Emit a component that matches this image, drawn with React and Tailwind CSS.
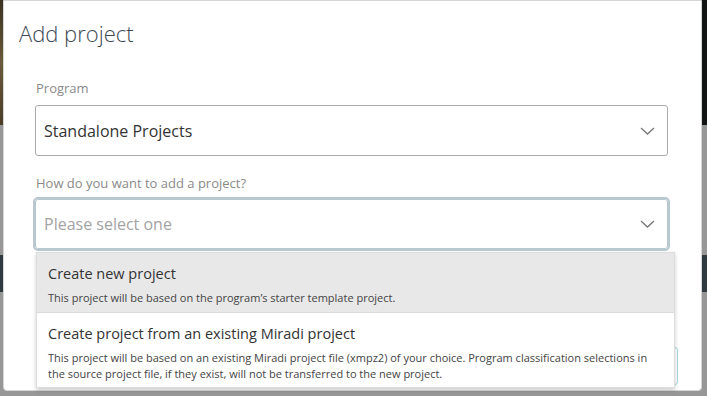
const options = [
  {
    title: 'Create new project',
    description: "This project will be based on the program’s starter template project.",
    active: true,
  },
  {
    title: 'Create project from an existing Miradi project',
    description:
      'This project will be based on an existing Miradi project file (xmpz2) of your choice. Program classification selections in the source project file, if they exist, will not be transferred to the new project.',
  },
];

function Chevron() {
  return (
    <svg width="15" height="8" viewBox="0 0 15 8" fill="none" className="text-[#777]">
      <path d="M1 1L7.5 7L14 1" stroke="currentColor" strokeWidth="1.3" />
    </svg>
  );
}

function Backdrop() {
  return (
    <div className="flex h-full flex-col">
      <div className="flex h-[125px]">
        <div className="flex-1 bg-gradient-to-b from-[#3b3222] via-[#6b5a3a] to-[#4a3d28]" />
        <div className="w-[300px] bg-[#111615]" />
      </div>
      <div className="h-[130px] bg-[#979797]" />
      <div className="h-[37px] bg-[#2e3a40]" />
      <div className="flex-1 bg-[#979797]" />
    </div>
  );
}

export default function App() {
  return (
    <div
      className="relative h-[396px] w-[707px] overflow-hidden"
      style={{ fontFamily: '"Open Sans", "Liberation Sans", sans-serif' }}
    >
      <Backdrop />

      <div className="absolute left-[3px] top-0 h-[391px] w-[699px] rounded-b-[4px] border border-[#d6d6d6] bg-white">
        <h1 className="pl-[15px] pt-[17px] text-[22px] font-light leading-[30px] text-[#3b4954]">
          Add project
        </h1>

        <div className="pl-[31px] pr-[33px] pt-[31px]">
          <label className="block pl-[1px] text-[13px] leading-[18px] text-[#8a8a8a]">Program</label>
          <div className="mt-[8px] flex h-[51px] items-center justify-between rounded-[3px] border border-[#ababab] pl-[8px] pr-[12px]">
            <span className="text-[16px] text-[#333]">Standalone Projects</span>
            <Chevron />
          </div>

          <label className="mt-[18px] block pl-[1px] text-[13px] leading-[18px] text-[#8a8a8a]">
            How do you want to add a project?
          </label>
          <div className="mt-[7px] flex h-[50px] items-center justify-between rounded-[3px] border border-[#b7c8cf] pl-[8px] pr-[12px] ring-2 ring-[#b7c8cf]">
            <span className="text-[16px] text-[#a3a3a3]">Please select one</span>
            <Chevron />
          </div>
        </div>

        <div className="absolute right-[23px] top-[346px] h-[38px] w-[80px] rounded-[3px] border border-[#a9d6df]" />

        <div className="absolute left-[32px] top-[251px] w-[639px] border border-[#dcdcdc] bg-white shadow-[0_2px_4px_rgba(0,0,0,0.2)]">
          {options.map((o, i) => (
            <div
              key={o.title}
              className={`px-[11px] pt-[11px] ${o.active ? 'bg-[#e8e8e8] pb-[6px]' : 'pb-[5px]'} ${
                i > 0 ? 'border-t border-[#d9d9d9]' : ''
              }`}
            >
              <div className="text-[14.5px] leading-[20px] text-[#333]">{o.title}</div>
              <div className="mt-[6px] text-[11px] leading-[16px] text-[#444]">{o.description}</div>
            </div>
          ))}
        </div>
      </div>
    </div>
  );
}
